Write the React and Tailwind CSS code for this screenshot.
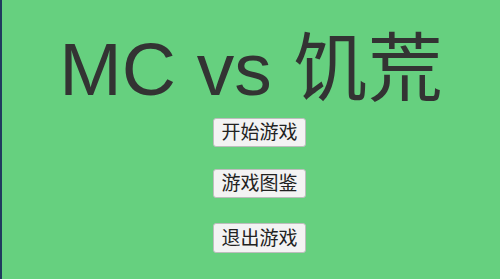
export default function App() {
  const font = { fontFamily: '"Liberation Sans", "Noto Sans CJK SC", sans-serif' };
  return (
    <div className="flex h-[279px] w-[500px] overflow-hidden bg-[#1f3b5e]">
      <div className="ml-[2px] flex flex-1 flex-col items-center bg-[#66d07f]" style={font}>
        <h1 className="mt-[32px] h-[75px] whitespace-nowrap text-[75px] font-normal leading-[75px] text-[#333333]">
          MC vs 饥荒
        </h1>
        <button className="ml-[17px] mt-[11px] h-[29px] w-[93px] rounded-[3px] border border-[#bdbdbd] bg-[#f3f3f3] text-[19px] leading-none text-[#222222]">
          开始游戏
        </button>
        <button className="ml-[17px] mt-[22px] h-[29px] w-[93px] rounded-[3px] border border-[#bdbdbd] bg-[#f3f3f3] text-[19px] leading-none text-[#222222]">
          游戏图鉴
        </button>
        <button className="ml-[17px] mt-[25px] h-[30px] w-[93px] rounded-[3px] border border-[#bdbdbd] bg-[#f3f3f3] text-[19px] leading-none text-[#222222]">
          退出游戏
        </button>
      </div>
    </div>
  );
}
